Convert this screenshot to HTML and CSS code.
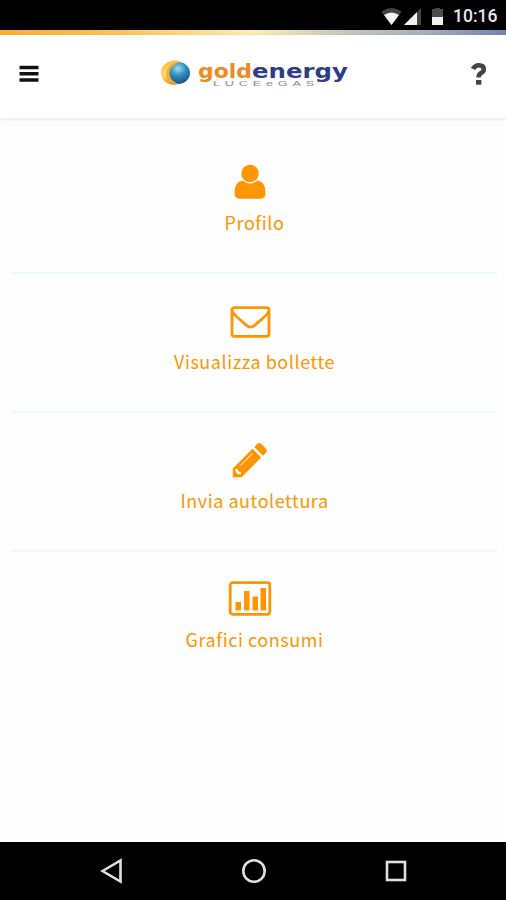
FILE: index.html
```html
<!DOCTYPE html>
<html lang="it">

<head>
  <meta charset="utf-8">
  <title>Goldenergy</title>
  <link rel="stylesheet" href="styles.css">
</head>

<body>
  <div class="status-bar">
    <svg class="status-icons" width="64" height="22" viewBox="0 0 64 22">
      <path d="M0.500 6 Q10.500 -2 20.500 6 L10.500 19 Z" fill="#444" />
      <path d="M3 9 Q10.500 4 18 9 L10.500 19 Z" fill="#f2f2f2" />
      <path d="M40 2 V19 H23 Z" fill="#444" />
      <path d="M36 6 V19 H23 Z" fill="#f2f2f2" />
      <path d="M54 2 h5 v1 h3 v8 H51 V3 h3 Z" fill="#4c4c4c" />
      <rect x="51" y="11" width="11" height="8" fill="#f2f2f2" />
    </svg>
    <span class="clock">10:16</span>
  </div>
  <div class="stripe"></div>

  <header class="header">
    <button class="icon-button">
      <svg width="20" height="18" viewBox="0 0 20 18">
        <path d="M0.500 2.500 H19.500 M0.500 8.800 H19.500 M0.500 15 H19.500" stroke="#111" stroke-width="3.600" />
      </svg>
    </button>
    <svg class="logo" width="190" height="34" viewBox="0 0 190 34">
      <defs>
        <radialGradient id="blue" cx="0.500" cy="0.300" r="0.700">
          <stop offset="0" stop-color="#9fdced" />
          <stop offset="0.450" stop-color="#3290bd" />
          <stop offset="1" stop-color="#174f89" />
        </radialGradient>
        <linearGradient id="gold" x1="0" y1="0" x2="0.500" y2="1">
          <stop offset="0" stop-color="#f7a823" />
          <stop offset="0.500" stop-color="#ffdc70" />
          <stop offset="1" stop-color="#e99312" />
        </linearGradient>
      </defs>
      <ellipse cx="18" cy="15" rx="12" ry="11" fill="url(#blue)" />
      <path d="M21 3 C9 0 0 8 1 16 C2 24 9 28 18 26.500 C10 25 6 20 7 14 C8 8 14 4 21 3 Z" fill="url(#gold)" />
      <path d="M22 3.500 C15 5 10 9 9.500 15 C9.500 20 13 24 19 26.300 C11 25.500 6 21 6.500 14 C7.500 7 14 3 22 3.500 Z" fill="#f3ae2c" />
      <text class="logo-name" x="38" y="19.500" textLength="54" lengthAdjust="spacingAndGlyphs" fill="#ee8a26">gold</text>
      <text class="logo-name" x="92" y="19.500" textLength="96" lengthAdjust="spacingAndGlyphs" fill="#2e3d87">energy</text>
      <text class="logo-sub" x="53" y="28" textLength="106" lengthAdjust="spacingAndGlyphs">LUCEeGAS</text>
    </svg>
    <button class="icon-button">
      <svg width="16" height="24" viewBox="0 0 16 24">
        <path d="M2 7 Q4 3.200 7.800 3.200 Q12.800 3.200 12.800 7.200 Q12.800 9.500 10 11 Q7.600 12.300 7.600 15.500" fill="none" stroke="#444" stroke-width="4.600" />
        <rect x="5" y="18" width="5.400" height="4.700" fill="#444" />
      </svg>
    </button>
  </header>

  <main class="menu">
    <a class="menu-item">
      <svg width="44" height="38" viewBox="0 0 44 38">
        <circle cx="22" cy="10.500" r="8.700" />
        <path d="M14.500 17.500 Q22 23.500 29.500 17.500 Q37.500 18.500 37.500 30 Q37.500 35.800 32 35.800 H12 Q6.500 35.800 6.500 30 Q6.500 18.500 14.500 17.500 Z" />
      </svg>
      <span>Profilo</span>
    </a>
    <a class="menu-item">
      <svg width="44" height="38" viewBox="0 0 44 38">
        <g class="outline">
          <rect x="4" y="5.700" width="37" height="28.600" rx="2.500" />
          <path d="M4.300 9 C5.300 13 10 15.500 18.300 23.200 Q22.500 27 26.800 23.200 C35.300 15.500 39.800 13 40.800 9" />
        </g>
      </svg>
      <span>Visualizza bollette</span>
    </a>
    <a class="menu-item">
      <svg width="44" height="38" viewBox="0 0 44 38">
        <path d="M4.800 27.500 L24.500 7.800 L33.200 16.500 L13.500 36.200 H4.800 Z" />
        <path d="M26.300 6 L29.500 2.700 Q31.300 1.200 33.200 2.800 L38.200 7.800 Q39.800 9.700 38.200 11.500 L35 14.700 Z" />
        <path d="M7.500 28 L9.800 28 L10.300 30.500 L13 31 L13 33 L10.500 33.500 L7.500 30.500 Z" fill="#fff" />
        <path d="M12.500 24.500 L24.500 12.500" stroke="#fff" stroke-width="1" />
      </svg>
      <span>Invia autolettura</span>
    </a>
    <a class="menu-item">
      <svg width="44" height="38" viewBox="0 0 44 38">
        <rect class="outline" x="2.200" y="2.700" width="39.600" height="31.600" rx="2.500" />
        <path d="M7.500 22 h5.500 v8.500 h-5.500 Z M16 11 h5.500 v19.500 h-5.500 Z M24.500 16.500 h5.500 v14 h-5.500 Z M32.500 8 h5.500 v22.500 h-5.500 Z" />
      </svg>
      <span>Grafici consumi</span>
    </a>
  </main>

  <nav class="nav-bar">
    <svg width="24" height="26" viewBox="0 0 24 26">
      <path d="M2.500 13 L20.500 2.500 V23.500 Z" />
    </svg>
    <svg width="26" height="26" viewBox="0 0 26 26">
      <circle cx="13" cy="13" r="10.700" />
    </svg>
    <svg width="24" height="26" viewBox="0 0 24 26">
      <rect x="3" y="4" width="18" height="18" />
    </svg>
  </nav>
</body>

</html>
```

FILE: styles.css
```css
body {
  display: flex;
  flex-direction: column;
  height: 900px;
  margin: 0;
  background-color: #fefefe;
  font-family: "Noto Sans CJK SC", "Noto Sans", sans-serif;
}

svg {
  display: block;
}

.status-bar {
  display: flex;
  align-items: center;
  justify-content: flex-end;
  gap: 8px;
  box-sizing: border-box;
  height: 30px;
  padding-right: 9px;
  background-color: #000000;
}

.status-icons {
  margin-top: 3px;
}

.clock {
  width: 44px;
  padding-top: 2px;
  color: #e8e8e8;
  font-family: Roboto, sans-serif;
  font-size: 17.5px;
  font-weight: 500;
  line-height: 24px;
  white-space: nowrap;
}

.stripe {
  height: 5px;
  background: linear-gradient(to right, #ffae32, #ffc65a 25%, #fff0b0 50%, #c4c9bd 68%, #aeb4c0 82%, #7484b2);
}

/* Barra superiore */
.header {
  display: flex;
  align-items: center;
  justify-content: space-between;
  box-sizing: border-box;
  height: 83px;
  padding: 0 19px;
  background-color: #ffffff;
  box-shadow: 0 1px 5px rgba(0, 0, 0, 0.1);
}

.icon-button {
  padding: 0 0 6px;
  border: none;
  background: none;
}

.logo {
  margin: 0 0 3px 0;
}

.logo-name {
  font-family: "DejaVu Sans", sans-serif;
  font-size: 20px;
  font-weight: bold;
}

.logo-sub {
  fill: #85899f;
  font-family: "Liberation Sans", sans-serif;
  font-size: 8px;
  letter-spacing: 3px;
}

/* Voci del menu */
.menu {
  flex: 1;
  padding: 17px 8px 0 11px;
}

.menu-item {
  display: flex;
  flex-direction: column;
  align-items: center;
  box-sizing: border-box;
  height: 139px;
  padding-top: 28px;
  border-bottom: 2px solid #e8fcfb;
  color: #ff9500;
  font-size: 18px;
  letter-spacing: 0.55px;
  line-height: 28px;
}

.menu-item:last-child {
  border-bottom: none;
}

.menu-item svg {
  margin: 0 10px 7px 0;
  fill: #ff9500;
}

.menu-item .outline {
  fill: none;
  stroke: #ff9500;
  stroke-width: 2.800;
}

/* Barra di navigazione */
.nav-bar {
  display: flex;
  align-items: center;
  justify-content: space-between;
  box-sizing: border-box;
  height: 58px;
  padding: 0 98px 0 100px;
  background-color: #000000;
}

.nav-bar svg {
  fill: none;
  stroke: #e0e0e0;
  stroke-width: 2.600;
}
```
